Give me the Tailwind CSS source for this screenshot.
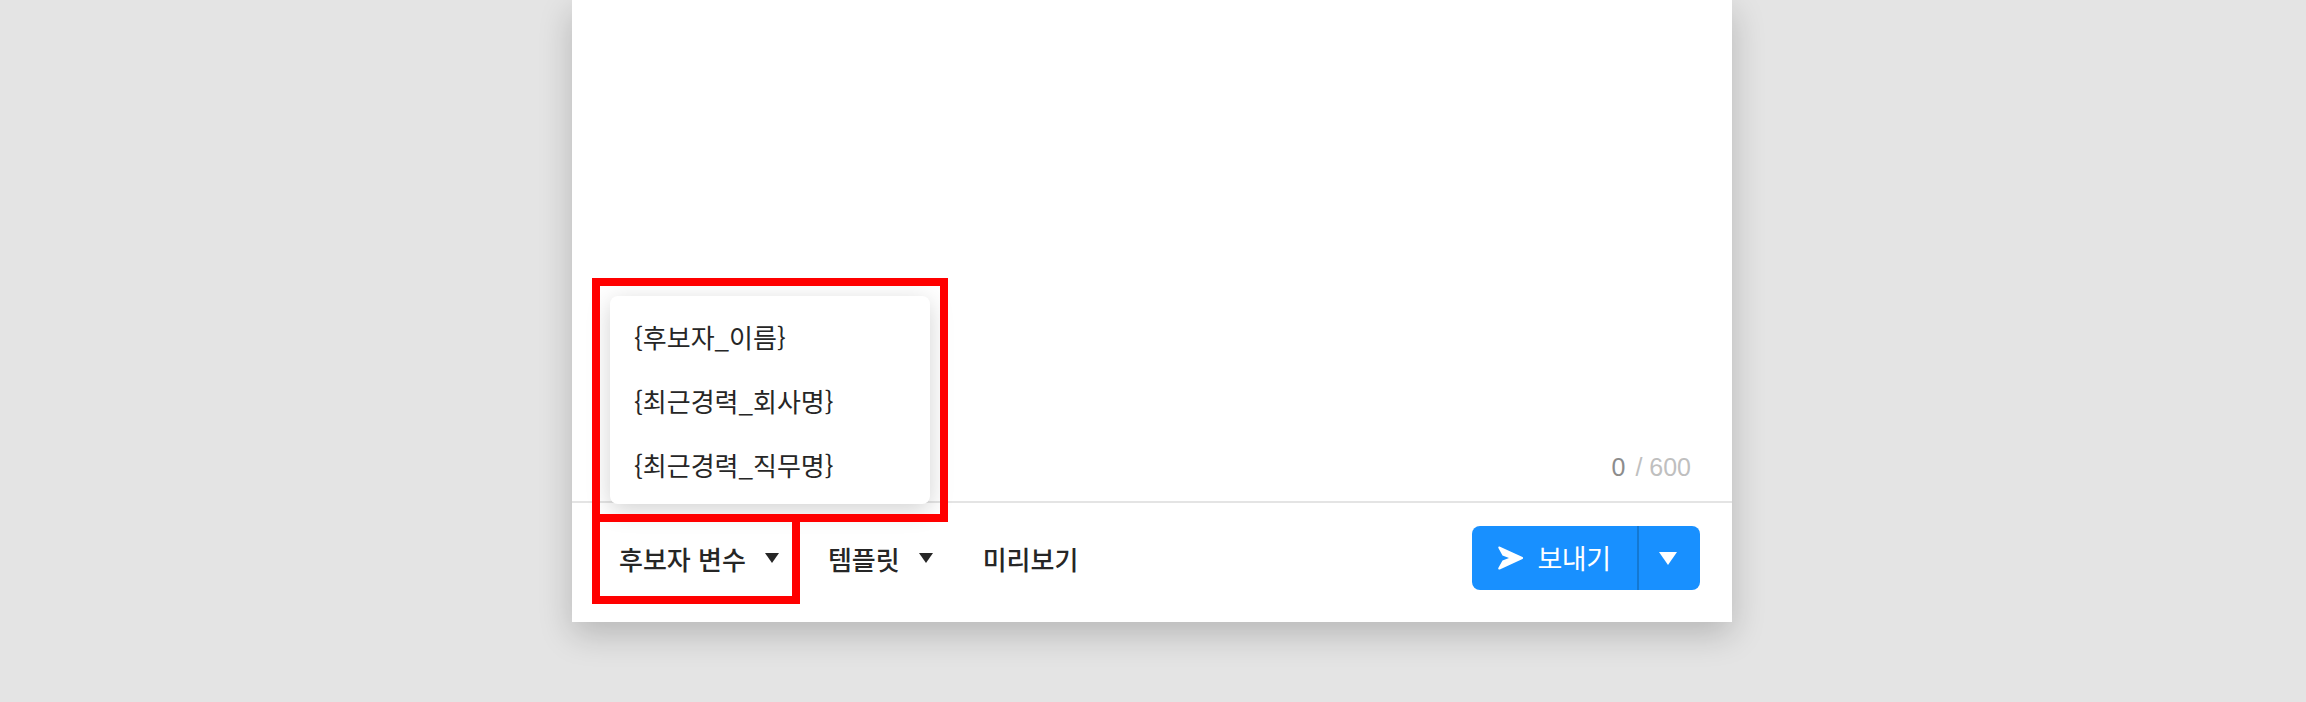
<!DOCTYPE html>
<html lang="ko">
  <head>
    <meta charset="UTF-8" />
    <title>메시지 보내기</title>
    <script src="https://cdn.jsdelivr.net/npm/@tailwindcss/browser@4"></script>
  </head>
  <body class="bg-[#e4e4e4] h-[702px] overflow-hidden font-['Noto_Sans_CJK_KR','Noto_Sans',sans-serif] text-[#262626]">
    <!-- Message card -->
    <div class="relative w-[1160px] h-[622px] ml-[572px] bg-white flex flex-col shadow-[0_12px_32px_rgba(0,0,0,0.2)]">
      <div class="flex-1 flex items-end justify-end pr-[41px] pb-[19px] text-[25px] leading-[30px] font-['Liberation_Sans',sans-serif]">
        <span class="text-[#8c8c8c]">0</span>
        <span class="text-[#bfbfbf] ml-[10px]">/ 600</span>
      </div>

      <!-- Toolbar -->
      <div class="h-[121px] border-t-2 border-[#e4e4e4] flex items-start pt-[23px] pl-[47px] pr-[32px]">
        <button class="flex items-center h-[64px] text-[26px] font-medium">
          후보자 변수
          <svg class="ml-[19px]" width="14" height="10" viewBox="0 0 14 10"><path d="M0 0h14L7 10z" fill="#262626" /></svg>
        </button>
        <button class="flex items-center h-[64px] ml-[49px] text-[26px] font-medium">
          템플릿
          <svg class="ml-[19px]" width="14" height="10" viewBox="0 0 14 10"><path d="M0 0h14L7 10z" fill="#262626" /></svg>
        </button>
        <button class="h-[64px] ml-[50px] text-[26px] font-medium">미리보기</button>

        <div class="ml-auto flex h-[64px] w-[228px] rounded-lg bg-[#1890ff] text-white">
          <button class="w-[165px] flex items-center justify-center text-[27px] tracking-[-0.5px] font-normal">
            <svg class="mr-[14px]" width="25" height="24" viewBox="0 0 25 24"><path d="M1.500.6 24.500 11c.8.400.8 1.600 0 2L1.800 23.400c-1 .4-1.800-.4-1.500-1.300L4.500 14.500 11 12 4.500 9.500.4 2C0 1 .6.200 1.500.6z" fill="#fff" /></svg>
            보내기
          </button>
          <div class="w-[2px] bg-[#1478d2]"></div>
          <button class="flex-1 flex items-center justify-center pr-[3px]">
            <svg width="18" height="13" viewBox="0 0 18 13"><path d="M0 0h18L9 13z" fill="#fff" /></svg>
          </button>
        </div>
      </div>

      <!-- Variable dropdown -->
      <ul class="absolute left-[38px] top-[296px] w-[320px] h-[208px] bg-white rounded-lg py-[8px] text-[26px] shadow-[0_6px_24px_rgba(0,0,0,0.18)]">
        <li class="h-[64px] flex items-center pl-[24px]">{후보자_이름}</li>
        <li class="h-[64px] flex items-center pl-[24px]">{최근경력_회사명}</li>
        <li class="h-[64px] flex items-center pl-[24px]">{최근경력_직무명}</li>
      </ul>

      <!-- Annotation boxes -->
      <div class="absolute left-[20px] top-[278px] w-[356px] h-[244px] border-[8px] border-[#ff0000]"></div>
      <div class="absolute left-[20px] top-[514px] w-[208px] h-[90px] border-[8px] border-[#ff0000]"></div>
    </div>
  </body>
</html>
